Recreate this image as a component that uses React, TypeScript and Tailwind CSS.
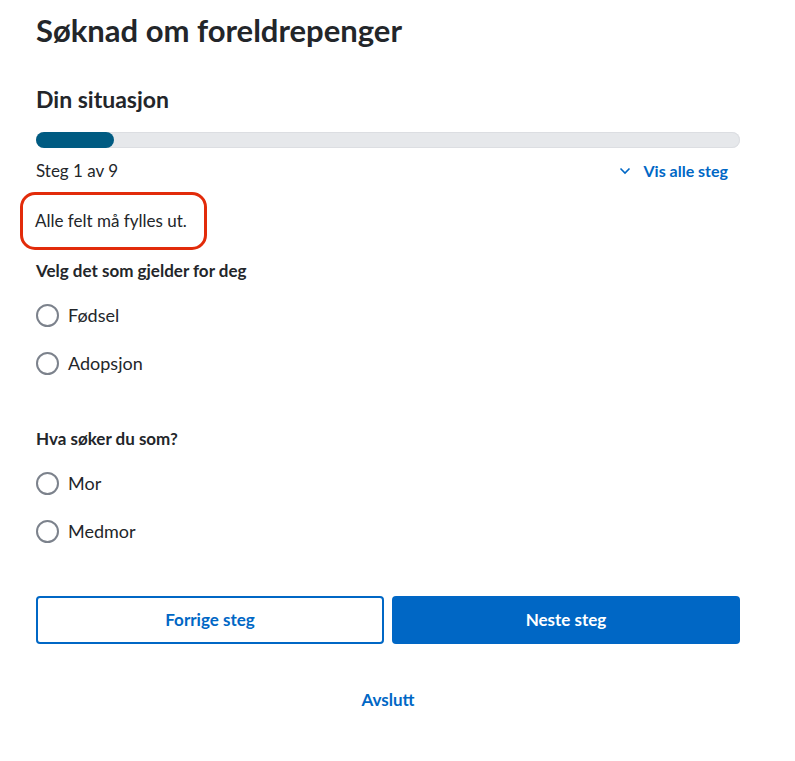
import React, { useState } from 'react';

const font = { fontFamily: 'Lato, "Noto Sans", sans-serif' };

const Radio: React.FC<{ label: string; name: string; value: string; checked: boolean; onChange: (v: string) => void }> = ({ label, name, value, checked, onChange }) => (
  <label className="flex items-center gap-[9px] h-[48px] cursor-pointer">
    <input
      type="radio"
      name={name}
      value={value}
      checked={checked}
      onChange={() => onChange(value)}
      className="appearance-none w-[23px] h-[23px] rounded-full border-2 border-[#7c828c] bg-white checked:border-[7px] checked:border-[#0067c5] m-0"
    />
    <span className="text-[18px] text-[#23262a]">{label}</span>
  </label>
);

const App: React.FC = () => {
  const [situasjon, setSituasjon] = useState('');
  const [rolle, setRolle] = useState('');

  return (
    <div className="min-h-[761px] bg-white" style={font}>
      <div className="w-[704px] ml-[36px] pt-[10px]">
        <h1 className="text-[31px] leading-[40px] font-bold text-[#23262a]">Søknad om foreldrepenger</h1>

        <h2 className="mt-[34px] text-[23px] leading-[30px] font-bold text-[#23262a]">Din situasjon</h2>

        <div className="mt-[18px] h-[16px] rounded-full bg-[#e6e8eb] shadow-[inset_0_0_0_1px_#dcdee2]">
          <div className="h-[16px] w-[78px] rounded-full bg-[#005b82]" />
        </div>

        <div className="mt-[12px] flex items-center justify-between h-[22px]">
          <span className="text-[17px] text-[#23262a]">Steg 1 av 9</span>
          <button className="flex items-center gap-[12px] mr-[12px] text-[16px] font-bold text-[#0067c5]">
            <svg width="12" height="8" viewBox="0 0 12 8" fill="none" stroke="#0067c5" strokeWidth="1.6">
              <path d="M1.5 1.5 L6 6 L10.5 1.5" />
            </svg>
            Vis alle steg
          </button>
        </div>

        <div className="mt-[10px] -ml-[16px] w-[187px] h-[58px] rounded-[15px] border-[3.5px] border-[#e22b0a] flex items-center pl-[12px]">
          <p className="text-[17px] text-[#23262a]">Alle felt må fylles ut.</p>
        </div>

        <fieldset className="mt-[9px]">
          <legend className="text-[17px] font-bold text-[#23262a] leading-[24px]">Velg det som gjelder for deg</legend>
          <div className="mt-[8px] flex flex-col">
            <Radio label="Fødsel" name="situasjon" value="fodsel" checked={situasjon === 'fodsel'} onChange={setSituasjon} />
            <Radio label="Adopsjon" name="situasjon" value="adopsjon" checked={situasjon === 'adopsjon'} onChange={setSituasjon} />
          </div>
        </fieldset>

        <fieldset className="mt-[40px]">
          <legend className="text-[17px] font-bold text-[#23262a] leading-[24px]">Hva søker du som?</legend>
          <div className="mt-[8px] flex flex-col">
            <Radio label="Mor" name="rolle" value="mor" checked={rolle === 'mor'} onChange={setRolle} />
            <Radio label="Medmor" name="rolle" value="medmor" checked={rolle === 'medmor'} onChange={setRolle} />
          </div>
        </fieldset>

        <div className="mt-[41px] grid grid-cols-2 gap-[8px]">
          <button className="h-[48px] rounded-[4px] border-2 border-[#0067c5] bg-white text-[17px] font-bold text-[#0067c5]">
            Forrige steg
          </button>
          <button className="h-[48px] rounded-[4px] bg-[#0067c5] text-[17px] font-bold text-white">
            Neste steg
          </button>
        </div>

        <div className="mt-[43px] flex justify-center">
          <button className="text-[17px] font-bold text-[#0067c5]">Avslutt</button>
        </div>
      </div>
    </div>
  );
};

export default App;
